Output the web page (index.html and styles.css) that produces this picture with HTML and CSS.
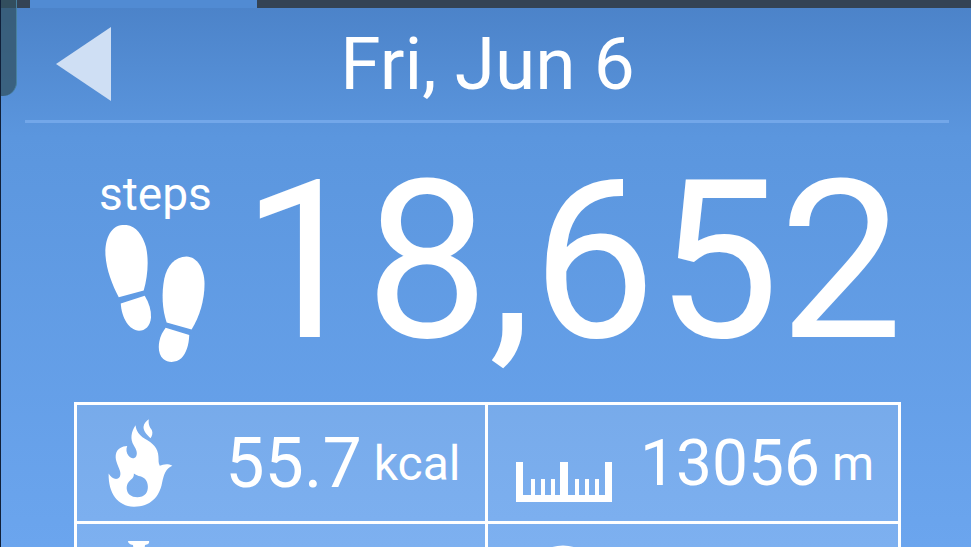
FILE: index.html
```
<!DOCTYPE html>
<html lang="en">
  <head>
    <meta charset="UTF-8" />
    <meta name="viewport" content="width=device-width, initial-scale=1.0" />
    <title>Pedometer</title>
    <link rel="stylesheet" href="styles.css">
  </head>
  <body>
    <!-- Status strip -->
    <div class="status">
      <div class="status-tab"></div>
    </div>
    <div class="edge-handle"></div>

    <!-- Header -->
    <header>
      <button class="back-btn" aria-label="Previous day">
        <svg viewBox="0 0 55 74" width="55" height="74">
          <path d="M0 37 L55 0 V74 Z" fill="#cfdff4" />
        </svg>
      </button>
      <h1>Fri, Jun 6</h1>
    </header>

    <main>
      <!-- Steps -->
      <section class="steps">
        <div class="steps-label">
          <span>steps</span>
          <svg viewBox="78 194 300 412" width="100" height="137" fill="#fff">
            <path d="M130 194 C165 190 190 220 201 260 C210 300 206 350 194 391 L119 411 C100 375 82 330 79 285 C77 235 95 197 130 194 Z" />
            <path d="M125 430 L197 407 C210 428 217 450 216 472 C214 498 198 512 180 512 C150 510 128 475 125 430 Z" />
            <path d="M323 289 C355 290 376 325 377 370 C377 420 362 470 338 508 L263 487 C250 450 247 400 256 355 C264 318 288 289 323 289 Z" />
            <path d="M260 503 L331 525 C330 555 322 580 307 595 C293 608 268 610 253 597 C240 586 237 565 241 544 C244 527 252 514 260 503 Z" />
          </svg>
        </div>
        <div class="steps-count">18,652</div>
      </section>

      <!-- Stats -->
      <section class="stats">
        <div class="stat">
          <svg viewBox="146 90 194 265" width="65" height="88" fill="#fff">
            <path d="M268 91 C266 106 270 114 277 123 C281 133 278 141 273 148 C264 138 252 128 252 114 C253 104 260 96 268 91 Z" />
            <path fill-rule="evenodd" d="M228 109 C230 126 239 139 255 149 C280 163 296 178 297 203 C298 214 296 222 301 231 C311 228 322 222 339 231 C318 240 314 258 308 282 C300 326 271 355 222 354 C175 352 146 315 147 254 C154 265 163 272 173 270 C183 267 184 256 181 246 C174 227 164 210 170 192 C174 179 187 172 203 171 C199 181 200 191 207 201 C214 210 225 211 230 202 C235 193 230 181 223 170 C211 150 215 129 228 109 Z M223 254 C224 267 216 270 208 279 C198 291 200 309 210 318 C224 329 248 328 259 315 C268 303 267 284 258 272 C249 261 236 264 223 254 Z" />
          </svg>
          <span class="value">55.7</span>
          <span class="unit">kcal</span>
        </div>
        <div class="stat">
          <svg viewBox="0 0 96 78" width="96" height="78" fill="#fff">
            <path d="M0 38 H7 V71 H15 V55 H19 V71 H25 V55 H29 V71 H35 V55 H39 V71 H44 V38 H52 V71 H59 V55 H63 V71 H69 V55 H73 V71 H79 V55 H83 V71 H89 V38 H96 V78 H0 Z" />
          </svg>
          <span class="value small">13056</span>
          <span class="unit">m</span>
        </div>
        <div class="stat">
          <svg viewBox="0 0 65 82" width="65" height="82" fill="#fff">
            <path d="M20 0 H41 Q42 3 37 4 L36 12 H26 L25 4 Q20 3 20 0 Z" />
            <circle cx="31" cy="46" r="30" fill="none" stroke="#fff" stroke-width="8" />
            <path d="M29 28 H34 V48 H29 Z" />
          </svg>
        </div>
        <div class="stat">
          <svg viewBox="0 0 96 74" width="96" height="74" fill="none" stroke="#fff" stroke-width="7">
            <circle cx="47" cy="37" r="33" />
            <path d="M47 37 L62 22" />
          </svg>
        </div>
      </section>
    </main>
  </body>
</html>
```
FILE: styles.css
```
/* Reset & Global Styles */
* {
  margin: 0;
  padding: 0;
  box-sizing: border-box;
}
body {
  height: 100vh;
  overflow: hidden;
  background: linear-gradient(#4b82c8, #5b96de 25%, #6ba5ee);
  color: #fff;
  font-family: Roboto, sans-serif;
}

/* Status strip */
.status {
  height: 8px;
  padding-left: 30px;
  background-color: #344354;
}
.status-tab {
  width: 227px;
  height: 100%;
  background-color: #518bd3;
}
.edge-handle {
  position: absolute;
  top: 0;
  left: 0;
  width: 17px;
  height: 96px;
  background-color: rgba(50, 81, 97, 0.75);
  border-right: 1px solid #47809f;
  border-radius: 0 0 14px 0;
}
body::before {
  content: "";
  position: absolute;
  top: 0;
  left: 0;
  z-index: 1;
  width: 1px;
  height: 100%;
  background-color: #10203a;
}

/* Header */
header {
  display: grid;
  grid-template-columns: 1fr auto 1fr;
  align-items: center;
  height: 115px;
  margin: 0 22px 0 25px;
  padding: 0 0 1px 31px;
  border-bottom: 3px solid #73a7e9;
}
.back-btn {
  display: flex;
  justify-self: start;
  background: none;
  border: none;
  cursor: pointer;
}
h1 {
  margin-right: 30px;
  font-size: 73px;
  font-weight: 400;
  line-height: 88px;
}

/* Steps */
.steps {
  display: flex;
  justify-content: space-between;
  padding: 44px 68px 40px 99px;
}
.steps-label {
  display: flex;
  flex-direction: column;
  align-items: center;
  gap: 4px;
  font-size: 46px;
  line-height: 54px;
}
.steps-count {
  font-size: 220px;
  line-height: 190px;
}

/* Stats */
.stats {
  display: grid;
  grid-template-columns: 1fr 1fr;
  margin: 0 70px 0 74px;
  border: 3px solid #fff;
}
.stat {
  display: flex;
  align-items: center;
  height: 119px;
  padding: 0 24px 0 28px;
  background-color: rgba(255, 255, 255, 0.12);
  border-bottom: 3px solid #fff;
}
.stat:nth-child(odd) {
  padding-left: 31px;
  border-right: 3px solid #fff;
}
.value {
  margin-left: auto;
  font-size: 70px;
}
.value.small {
  font-size: 64px;
}
.unit {
  margin-left: 12px;
  font-size: 48px;
}
```
